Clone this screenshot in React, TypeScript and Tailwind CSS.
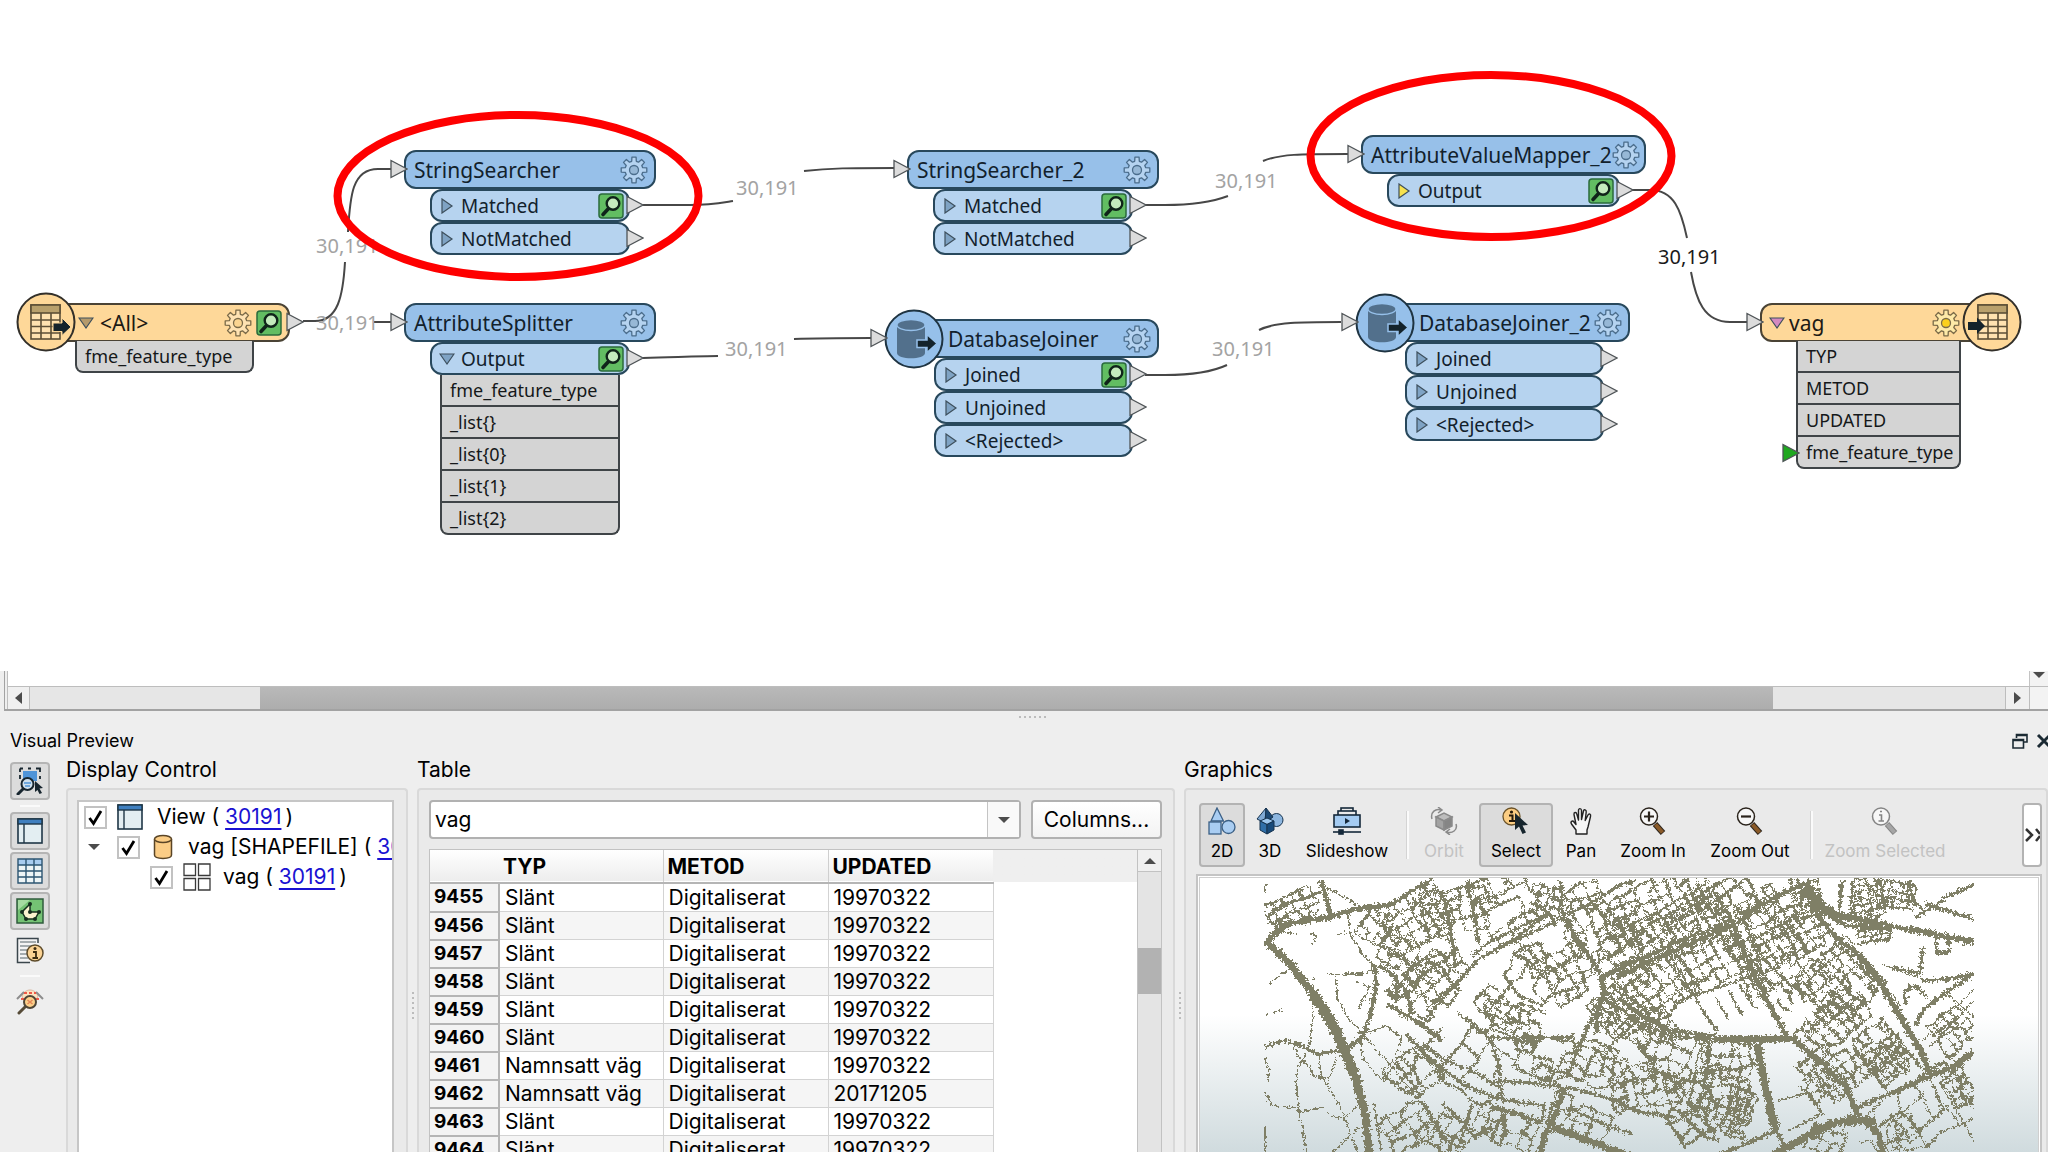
import type { ReactNode } from "react";

const FONT_NODE = "font-['Noto_Sans','Open_Sans',sans-serif]";
const FONT_UI = "font-['Inter','Liberation_Sans',sans-serif]";

/* ---------- canvas icons ---------- */

function gearPath(c: number, outer: number, inner: number) {
  const pts: string[] = [];
  for (let i = 0; i < 8; i++) {
    const a = (i * Math.PI) / 4 - Math.PI / 2;
    const steps: [number, number][] = [
      [-0.26, inner],
      [-0.16, outer],
      [0.16, outer],
      [0.26, inner],
    ];
    steps.forEach(([d, r]) => {
      pts.push(`${(c + Math.cos(a + d) * r).toFixed(1)} ${(c + Math.sin(a + d) * r).toFixed(1)}`);
    });
  }
  return `M${pts.join("L")}Z`;
}

const GEAR = gearPath(14, 13, 9);

function Gear({ body, line, hub }: { body: string; line: string; hub: string }) {
  return (
    <svg width="28" height="28" viewBox="0 0 28 28" className="shrink-0">
      <path d={GEAR} fill={body} stroke={line} strokeWidth="1.3" strokeLinejoin="round" />
      <circle cx="14" cy="14" r="4.5" fill={hub} stroke={line} strokeWidth="1.3" />
    </svg>
  );
}

function Inspect() {
  return (
    <svg width="26" height="26" viewBox="0 0 26 26" className="shrink-0">
      <rect x="1" y="1" width="24" height="24" rx="3" fill="#62bd62" stroke="#2b6b3c" strokeWidth="1.5" />
      <path d="M11 15L5 21.500" stroke="#10241a" strokeWidth="3.6" strokeLinecap="round" />
      <circle cx="15" cy="10.500" r="6.300" fill="#c4ebbd" stroke="#10241a" strokeWidth="2.400" />
    </svg>
  );
}

function Arrow({ fill = "#dcdcdc" }: { fill?: string }) {
  return (
    <svg width="18" height="20" viewBox="0 0 18 20" className="block">
      <path d="M1 1.500L17 10L1 18.500Z" fill={fill} stroke="#4f5457" strokeWidth="1.3" />
    </svg>
  );
}

function Toggle({ open, fill }: { open?: boolean; fill: string }) {
  return (
    <svg width="16" height="16" viewBox="0 0 16 16" className="shrink-0">
      <path d={open ? "M1 3H15L8 13Z" : "M3 1L13 8L3 15Z"} fill={fill} stroke="#3d4f5c" strokeWidth="1.2" />
    </svg>
  );
}

function DatabaseBadge() {
  return (
    <svg width="60" height="60" viewBox="0 0 60 60">
      <circle cx="30" cy="30" r="28.500" fill="#96c0ea" stroke="#1f3442" strokeWidth="2" />
      <path d="M13 16V44C13 51 41 51 41 44V16Z" fill="#52708c" />
      <ellipse cx="27" cy="16" rx="14" ry="5.500" fill="#52708c" stroke="#96c0ea" strokeWidth="1.4" />
      <path d="M33 31H43V25.500L53 34.500L43 43.500V38.500H33Z" fill="#14232b" stroke="#96c0ea" strokeWidth="1.5" />
    </svg>
  );
}

function TableBadge({ writer }: { writer?: boolean }) {
  const x = writer ? 16 : 15;
  return (
    <svg width="60" height="60" viewBox="0 0 60 60">
      <circle cx="30" cy="30" r="28.500" fill="#fed899" stroke="#33302a" strokeWidth="2" />
      <g stroke="#5c4f36" strokeWidth="1.6" fill="#fee2b0">
        <rect x={x} y="13" width="29" height="34" />
        <rect x={x} y="13" width="29" height="8" fill="#b8a06c" />
        <path d={`M${x} 28H${x + 29}M${x} 34.500H${x + 29}M${x} 41H${x + 29}M${x + 10} 21V47M${x + 20} 21V47`} />
      </g>
      {writer ? (
        <path d="M6 30H15V25.500L23 34L15 42V38H6Z" fill="#14232b" />
      ) : (
        <path d="M37 31H46V26L55 35L46 43.500V39.500H37Z" fill="#14232b" stroke="#fed899" />
      )}
    </svg>
  );
}

/* ---------- workflow nodes ---------- */

interface Port {
  name: string;
  inspect?: boolean;
  open?: boolean;
  fresh?: boolean;
}

interface NodeProps {
  x: number;
  y: number;
  w: number;
  title: string;
  titlePad?: string;
  badge?: "database";
  portPad: string;
  ports: Port[];
  attrs?: string[];
}

function AttrList({ attrs }: { attrs: string[] }) {
  return attrs.map((a, i) => (
    <div
      key={a}
      className={`flex h-8 items-center border-2 border-t-0 border-[#3f4447] bg-[#d4d4d4] pl-2 text-lg leading-6 text-[#15181a] ${
        i === attrs.length - 1 ? "rounded-b-lg" : ""
      }`}
    >
      {a}
    </div>
  ));
}

function TransformerNode({ x, y, w, title, titlePad = "pl-2", badge, portPad, ports, attrs }: NodeProps) {
  return (
    <div className="absolute" style={{ left: x, top: y, width: w }}>
      <div
        className={`flex h-[39px] items-center justify-between rounded-xl border-2 border-[#28485c] bg-[#97c0e9] pr-1.5 text-[21px] leading-8 text-[#12212c] ${titlePad}`}
      >
        <span className="whitespace-nowrap">{title}</span>
        <Gear body="#b5d3f0" line="#4b6d8c" hub="#97b8d6" />
      </div>
      {badge && (
        <div className="absolute -left-[30px] -top-[10px]">
          <DatabaseBadge />
        </div>
      )}
      <div className={badge ? "absolute -left-[44px] top-[9px]" : "absolute -left-[14px] top-[9px]"}>
        <Arrow />
      </div>
      <div className={`pr-[26px] ${portPad}`}>
        {ports.map((p) => (
          <div
            key={p.name}
            className="relative flex h-[33px] items-center gap-1.5 rounded-xl border-2 border-[#28485c] bg-[#b6d3ef] pl-[7px] pr-1 text-[19px] leading-7 text-[#12212c]"
          >
            <Toggle open={p.open} fill={p.fresh ? "#f7e24e" : "#7fa3c4"} />
            <span className="flex-1">{p.name}</span>
            {p.inspect && <Inspect />}
            <div className="absolute -right-[16px] top-[4px]">
              <Arrow />
            </div>
          </div>
        ))}
        {attrs && (
          <div className="px-2.5">
            <AttrList attrs={attrs} />
          </div>
        )}
      </div>
    </div>
  );
}

const NODES: NodeProps[] = [
  { x: 404, y: 150, w: 252, title: "StringSearcher", portPad: "pl-[26px]", ports: [{ name: "Matched", inspect: true }, { name: "NotMatched" }] },
  {
    x: 404, y: 303, w: 252, title: "AttributeSplitter", portPad: "pl-[26px]",
    ports: [{ name: "Output", inspect: true, open: true }],
    attrs: ["fme_feature_type", "_list{}", "_list{0}", "_list{1}", "_list{2}"],
  },
  { x: 907, y: 150, w: 252, title: "StringSearcher_2", portPad: "pl-[26px]", ports: [{ name: "Matched", inspect: true }, { name: "NotMatched" }] },
  {
    x: 914, y: 319, w: 245, title: "DatabaseJoiner", titlePad: "pl-8", badge: "database", portPad: "pl-5",
    ports: [{ name: "Joined", inspect: true }, { name: "Unjoined" }, { name: "<Rejected>" }],
  },
  { x: 1361, y: 135, w: 285, title: "AttributeValueMapper_2", titlePad: "pl-2", portPad: "pl-[26px]", ports: [{ name: "Output", inspect: true, fresh: true }] },
  {
    x: 1385, y: 303, w: 245, title: "DatabaseJoiner_2", titlePad: "pl-8", badge: "database", portPad: "pl-5",
    ports: [{ name: "Joined" }, { name: "Unjoined" }, { name: "<Rejected>" }],
  },
];

function ReaderNode() {
  return (
    <div className="absolute left-[46px] top-[303px] w-[244px]">
      <div className="flex h-[39px] items-center gap-1 rounded-r-xl border-2 border-[#4a4335] bg-[#fed899] pl-[30px] pr-1.5 text-[21px] leading-8 text-[#1c1a15]">
        <Toggle open fill="#b59a6b" />
        <span className="flex-1 pl-0.5">&lt;All&gt;</span>
        <Gear body="#fee2b2" line="#7a6a48" hub="#fbd591" />
        <Inspect />
      </div>
      <div className="absolute -left-[30px] -top-[11px]">
        <TableBadge />
      </div>
      <div className="absolute -right-[14px] top-[9px]">
        <Arrow />
      </div>
      <div className="-mt-px ml-[29px] w-[179px]">
        <AttrList attrs={["fme_feature_type"]} />
      </div>
    </div>
  );
}

function WriterNode() {
  return (
    <div className="absolute left-[1760px] top-[303px] w-[232px]">
      <div className="flex h-[39px] items-center gap-1 rounded-l-xl border-2 border-[#4a4335] bg-[#fed899] pl-[7px] pr-[30px] text-[21px] leading-8 text-[#1c1a15]">
        <Toggle open fill="#d58ac0" />
        <span className="flex-1">vag</span>
        <Gear body="#feeaa8" line="#7a6a48" hub="#fbd01c" />
      </div>
      <div className="absolute -right-[30px] -top-[11px]">
        <TableBadge writer />
      </div>
      <div className="absolute -left-[14px] top-[9px]">
        <Arrow />
      </div>
      <div className="-mt-px ml-9 w-[165px]">
        <AttrList attrs={["TYP", "METOD", "UPDATED", "fme_feature_type"]} />
      </div>
      <div className="absolute bottom-[6px] left-[22px]">
        <Arrow fill="#1fa81f" />
      </div>
    </div>
  );
}

const EDGES = [
  "M303 321H315C338 321 343 296 345 262",
  "M348 232C350 196 352 169 378 169H392",
  "M374 322H392",
  "M643 205H690C710 205 720 203 733 201",
  "M804 171C830 168 850 168 895 168",
  "M1145 205H1165C1190 205 1212 202 1228 196",
  "M1263 161C1280 154 1300 154 1348 154",
  "M643 358C680 357 700 356 718 356",
  "M794 339C820 338 840 338 871 338",
  "M1145 375H1165C1190 375 1212 372 1227 365",
  "M1259 330C1275 322 1300 322 1341 322",
  "M1631 190H1650C1674 190 1681 210 1687 238",
  "M1691 272C1696 300 1704 322 1730 322H1748",
];

const COUNTS: { x: number; y: number; dark?: boolean }[] = [
  { x: 316, y: 232 },
  { x: 316, y: 309 },
  { x: 736, y: 174 },
  { x: 725, y: 335 },
  { x: 1215, y: 167 },
  { x: 1212, y: 335 },
  { x: 1658, y: 243, dark: true },
];

function Workspace() {
  return (
    <section className={`relative h-[671px] shrink-0 overflow-hidden bg-white ${FONT_NODE}`} aria-label="Workspace">
      <svg className="absolute left-0 top-0" width="2048" height="671" viewBox="0 0 2048 671" fill="none" stroke="#474747" strokeWidth="2">
        {EDGES.map((d) => (
          <path key={d} d={d} />
        ))}
      </svg>
      {COUNTS.map((c) => (
        <span
          key={`${c.x}-${c.y}`}
          className={`absolute text-xl leading-7 ${c.dark ? "text-[#1a1a1a]" : "text-[#a3a3a3]"}`}
          style={{ left: c.x, top: c.y }}
        >
          30,191
        </span>
      ))}
      <ReaderNode />
      {NODES.map((n) => (
        <TransformerNode key={n.title} {...n} />
      ))}
      <WriterNode />
      <svg className="absolute left-0 top-0" width="2048" height="671" viewBox="0 0 2048 671" fill="none" stroke="#fe0000" strokeWidth="8">
        <ellipse cx="518" cy="196" rx="180.500" ry="81" />
        <ellipse cx="1491" cy="156" rx="180.500" ry="81" />
      </svg>
    </section>
  );
}

function Caret({ d }: { d: string }) {
  return (
    <svg width="14" height="14" viewBox="0 0 14 14" fill="#4c4c4c" className="shrink-0">
      <path d={d} />
    </svg>
  );
}

function WorkspaceScrollbars() {
  return (
    <div className="ml-1 shrink-0 border-b-2 border-l border-[#a2a2a2]">
      <div className="ml-0.5 border-l border-[#bdbdbd] bg-white">
        <div className="flex h-[15px] justify-end">
          <div className="flex w-[19px] items-start justify-center overflow-hidden border-l border-[#c4c4c4] bg-[#f3f3f3]">
            <Caret d="M1 1H13L7 7Z" />
          </div>
        </div>
        <div className="flex h-[23px] border-t border-[#bdbdbd] bg-[#e6e6e6]">
          <button aria-label="Scroll left" className="flex w-[22px] items-center justify-center border-r border-[#bdbdbd] bg-[#f0f0f0]">
            <Caret d="M10 1V13L3 7Z" />
          </button>
          <div className="w-[230px]" />
          <div className="flex-1 bg-gradient-to-b from-[#b9b9b9] to-[#adadad]" />
          <div className="w-[232px]" />
          <button aria-label="Scroll right" className="flex w-6 items-center justify-center border-l border-[#bdbdbd] bg-[#f0f0f0]">
            <Caret d="M3 1V13L10 7Z" />
          </button>
          <div className="w-[19px] border-l border-[#bdbdbd] bg-[#f3f3f3]" />
        </div>
      </div>
    </div>
  );
}

/* ---------- visual preview: side rail ---------- */

function ViewIcon() {
  return (
    <svg width="26" height="26" viewBox="0 0 26 26" className="shrink-0">
      <rect x="1" y="1" width="24" height="24" fill="#e3eef2" stroke="#1e3646" strokeWidth="1.6" />
      <rect x="1" y="1" width="24" height="5" fill="#3f7fbf" stroke="#1e3646" strokeWidth="1.4" />
      <path d="M7 6V25" stroke="#1e3646" strokeWidth="1.4" />
    </svg>
  );
}

function GridIcon() {
  return (
    <svg width="26" height="26" viewBox="0 0 26 26">
      <rect x="1" y="1" width="24" height="24" fill="#eef5f6" />
      <rect x="1" y="1" width="24" height="6" fill="#a9cdf0" />
      <path d="M1 1H25V25H1ZM1 7H25M1 13H25M1 19H25M9 1V25M17 1V25" fill="none" stroke="#2d5672" strokeWidth="1.4" />
    </svg>
  );
}

function GraphicsIcon() {
  return (
    <svg width="28" height="26" viewBox="0 0 28 26">
      <rect x="1" y="1" width="26" height="24" fill="#74c274" stroke="#2f5c3c" strokeWidth="1.5" />
      <path d="M2 24V12L14 2H2Z" fill="#a5dba1" />
      <path d="M14 6L14 14L23 14L19 21H10L6 14Z" fill="#fbf3cf" stroke="#16301f" strokeWidth="1.5" />
      <g fill="#16301f">
        <circle cx="14" cy="6" r="2" />
        <circle cx="14" cy="14" r="2" />
        <circle cx="23" cy="14" r="2" />
        <circle cx="19" cy="21" r="2" />
        <circle cx="10" cy="21" r="2" />
        <circle cx="6" cy="14" r="2" />
      </g>
    </svg>
  );
}

function InspectAreaIcon() {
  return (
    <svg width="28" height="28" viewBox="0 0 28 28">
      <rect x="7" y="4" width="14" height="10" fill="#4f94d8" />
      <path d="M4 1.500H7M12 1.500H15M20 1.500H24V5M4 1.500V5M4 8V12M24 9V12" fill="none" stroke="#17252e" strokeWidth="1.800" />
      <path d="M7 22L2 27" stroke="#17252e" strokeWidth="3" strokeLinecap="round" />
      <circle cx="11.500" cy="17" r="6" fill="#cfe0ee" stroke="#17252e" strokeWidth="2" />
      <path d="M8 16H15M9 19H14" stroke="#4f94d8" strokeWidth="1.500" />
      <path d="M19 14L27 21L23.500 21.500L26 26L23.500 27L21.500 23L19 25Z" fill="#17252e" />
    </svg>
  );
}

function InfoTableIcon() {
  return (
    <svg width="28" height="28" viewBox="0 0 28 28">
      <path d="M22 6V1.500H1.500V25.500H14" fill="#f4f4f4" stroke="#3a464c" strokeWidth="1.500" />
      <path d="M4 5H20M4 9H16M4 13H12M4 17H11M4 21H12" stroke="#8b9498" strokeWidth="1.500" />
      <circle cx="19" cy="16" r="8" fill="#fbd394" stroke="#5d4b2a" strokeWidth="1.500" />
      <circle cx="19" cy="11.500" r="1.500" fill="#3c2d12" />
      <path d="M17 15H20V21M16.500 21H22" fill="none" stroke="#3c2d12" strokeWidth="1.800" />
    </svg>
  );
}

function EyeSearchIcon() {
  return (
    <svg width="28" height="28" viewBox="0 0 28 28">
      <path d="M6 9C9 1 19 1 22 9L20 14H8Z" fill="#fde3c0" stroke="#d8b7a0" strokeWidth="1" />
      <path d="M1 12L8 5M27 12L20 5" stroke="#8d8d8d" strokeWidth="2" />
      <path d="M8 6H20M5 12H23" stroke="#ee5a48" strokeWidth="2" strokeDasharray="3 2" />
      <path d="M9 20L3 26" stroke="#564b38" strokeWidth="3" strokeLinecap="round" />
      <circle cx="14" cy="15" r="6" fill="#fbd08a" stroke="#4e4536" strokeWidth="2" />
      <path d="M11.500 13L16.500 17M16.500 13L11.500 17" stroke="#e58658" strokeWidth="1.500" />
    </svg>
  );
}

function RailButton({ label, pressed, children }: { label: string; pressed?: boolean; children: ReactNode }) {
  return (
    <button
      aria-label={label}
      aria-pressed={pressed}
      className={`flex h-[38px] w-10 items-center justify-center rounded border-2 ${
        pressed ? "border-[#b5b5b5] bg-[#dcdcdc]" : "border-transparent"
      }`}
    >
      {children}
    </button>
  );
}

function Rail() {
  return (
    <nav className="flex w-[58px] shrink-0 flex-col items-center gap-0.5 pl-px pt-1" aria-label="Preview panels">
      <RailButton label="Inspect selection" pressed><InspectAreaIcon /></RailButton>
      <div className="my-[3px] h-0.5 w-5 bg-[#fafafa]" />
      <RailButton label="Display control" pressed><ViewIcon /></RailButton>
      <RailButton label="Table" pressed><GridIcon /></RailButton>
      <RailButton label="Graphics" pressed><GraphicsIcon /></RailButton>
      <RailButton label="Feature information"><InfoTableIcon /></RailButton>
      <div className="my-[3px] h-0.5 w-5 bg-[#fafafa]" />
      <RailButton label="Toggle inspection"><EyeSearchIcon /></RailButton>
    </nav>
  );
}

/* ---------- display control ---------- */

function Tick({ label }: { label: string }) {
  return (
    <span className="grid size-[23px] shrink-0">
      <input
        type="checkbox"
        defaultChecked
        aria-label={label}
        className="peer col-start-1 row-start-1 size-[23px] appearance-none border-2 border-[#c2c2c2] bg-white"
      />
      <svg viewBox="0 0 23 23" className="pointer-events-none invisible col-start-1 row-start-1 peer-checked:visible">
        <path d="M5.500 12L9.500 17.500L17 5" fill="none" stroke="#000" strokeWidth="2.800" />
      </svg>
    </span>
  );
}

function DbIcon() {
  return (
    <svg width="26" height="26" viewBox="0 0 26 26" fill="#fbcd86" stroke="#5a4526" strokeWidth="1.500" className="shrink-0">
      <path d="M4.500 5V21C4.500 25.500 21.500 25.500 21.500 21V5" />
      <ellipse cx="13" cy="5" rx="8.500" ry="3.600" />
    </svg>
  );
}

function LayersIcon() {
  return (
    <svg width="28" height="28" viewBox="0 0 28 28" fill="none" stroke="#3a3a3a" strokeWidth="1.300" className="shrink-0">
      <path d="M1 1H12.500V12.500H1ZM15.500 1H27V12.500H15.500ZM1 15.500H12.500V27H1ZM15.500 15.500H27V27H15.500Z" />
    </svg>
  );
}

function Count() {
  return <a href="#features" className="mr-1 text-[#1a12d2] underline decoration-2 underline-offset-4">30191</a>;
}

function Panel({ title, children }: { title: string; children: ReactNode }) {
  return (
    <section className="flex min-w-0 flex-1 flex-col">
      <h2 className="h-[30px] text-[21px] leading-6">{title}</h2>
      <div className="min-h-0 flex-1 rounded-t border-2 border-b-0 border-[#d9d9d9] bg-[#eaeaea]">{children}</div>
    </section>
  );
}

function DisplayTree() {
  return (
    <div className="h-full pl-[9px] pr-3 pt-2.5">
      <ul className="h-full overflow-hidden whitespace-nowrap border-2 border-b-0 border-[#c6c6c6] bg-white text-[21px] leading-[30px]">
        <li className="flex h-[30px] items-center gap-2.5 pl-[5px]">
          <Tick label="View" />
          <ViewIcon />
          <span className="pl-1">View ( <Count />)</span>
        </li>
        <li className="flex h-[30px] items-center gap-2.5 pl-2">
          <button aria-label="Collapse vag" className="w-5 shrink-0"><Caret d="M1 4H13L7 10Z" /></button>
          <Tick label="vag SHAPEFILE" />
          <DbIcon />
          <span className="pl-0.5">vag [SHAPEFILE] ( <Count />)</span>
        </li>
        <li className="flex h-[30px] items-center gap-2.5 pl-[71px]">
          <Tick label="vag" />
          <LayersIcon />
          <span className="pl-0.5">vag ( <Count />)</span>
        </li>
      </ul>
    </div>
  );
}

function SplitDots() {
  return (
    <div className="flex w-[9px] shrink-0 flex-col items-center gap-[3px] pt-[234px]">
      {[...Array(6)].map((_, i) => (
        <i key={i} className="size-0.5 bg-[#bcbcbc]" />
      ))}
    </div>
  );
}

/* ---------- table ---------- */

const ROWS = [
  ["9455", "Slänt", "19970322"],
  ["9456", "Slänt", "19970322"],
  ["9457", "Slänt", "19970322"],
  ["9458", "Slänt", "19970322"],
  ["9459", "Slänt", "19970322"],
  ["9460", "Slänt", "19970322"],
  ["9461", "Namnsatt väg", "19970322"],
  ["9462", "Namnsatt väg", "20171205"],
  ["9463", "Slänt", "19970322"],
  ["9464", "Slänt", "19970322"],
];

function TableView() {
  return (
    <div className="flex h-full flex-col gap-2.5 overflow-hidden pl-2.5 pr-[11px] pt-2.5">
      <div className="flex h-[39px] shrink-0 gap-2.5">
        <label className="grid flex-1">
          <select
            aria-label="Feature type"
            className="col-start-1 row-start-1 appearance-none rounded border-2 border-[#b1b1b1] bg-white px-1 text-[21px]"
          >
            <option>vag</option>
          </select>
          <span className="pointer-events-none col-start-1 row-start-1 my-0.5 mr-0.5 flex w-8 items-center justify-center justify-self-end border-l border-[#c4c4c4] bg-[#f9f9f9]">
            <Caret d="M1 4H13L7 10Z" />
          </span>
        </label>
        <button className="w-[131px] rounded border-2 border-[#b1b1b1] bg-gradient-to-b from-white to-[#f3f3f3] text-[21px]">
          Columns...
        </button>
      </div>
      <div className="flex min-h-0 flex-1 border border-b-0 border-[#c2c2c2] bg-white">
        <div className="flex-1 overflow-hidden">
          <div className="bg-gradient-to-b from-[#efefef] from-[32px] to-white to-[32px]">
            <table className="w-[563px] table-fixed border-collapse text-left text-[21px]">
              <colgroup>
                <col className="w-[69px]" />
                <col className="w-[164px]" />
                <col className="w-[165px]" />
                <col className="w-[165px]" />
              </colgroup>
              <thead>
                <tr className="h-[33px] border-b-2 border-[#b5b5b5] bg-gradient-to-b from-white to-[#ededed] leading-[30px]">
                  <td />
                  <th scope="col" className="border-r border-[#cfcfcf] p-0 pl-1 pt-px font-bold">TYP</th>
                  <th scope="col" className="border-r border-[#cfcfcf] p-0 pl-1 pt-px font-bold">METOD</th>
                  <th scope="col" className="p-0 pl-1 pt-px font-bold">UPDATED</th>
                </tr>
              </thead>
              <tbody>
                {ROWS.map(([id, typ, date]) => (
                  <tr key={id} className="h-7 bg-white leading-[27px] even:bg-[#f5f5f5]">
                    <th scope="row" className="border-b-2 border-r-2 border-[#b5b5b5] bg-[#f3f3f3] p-0 pl-1 text-[19px] font-bold leading-[26px]">{id}</th>
                    <td className="border-b border-r border-[#d3d3d3] p-0 pl-[5px]">{typ}</td>
                    <td className="border-b border-r border-[#d3d3d3] p-0 pl-[5px]">Digitaliserat</td>
                    <td className="border-b border-r border-[#d3d3d3] p-0 pl-[5px]">{date}</td>
                  </tr>
                ))}
              </tbody>
            </table>
          </div>
        </div>
        <div className="flex w-6 flex-col border-l border-[#c2c2c2] bg-[#e4e4e4]">
          <button aria-label="Scroll up" className="flex h-[22px] items-center justify-center border-b border-[#c2c2c2] bg-[#f0f0f0]">
            <Caret d="M1 10H13L7 4Z" />
          </button>
          <div className="h-[76px]" />
          <div className="h-[46px] bg-[#b2b2b2]" />
        </div>
      </div>
    </div>
  );
}

/* ---------- graphics toolbar ---------- */

const svg28 = { width: 28, height: 28, viewBox: "0 0 28 28" };

const Icon2D = (
  <svg {...svg28} fill="#a9cdf2" stroke="#3a5f85" strokeWidth="1.300">
    <path d="M9 1L15.500 14H3Z" />
    <rect x="1" y="15" width="12" height="12" />
    <circle cx="20.500" cy="20" r="6.500" />
  </svg>
);
const Icon3D = (
  <svg {...svg28} stroke="#16334f" strokeWidth="1">
    <circle cx="20.500" cy="13" r="6.500" fill="#8db6df" />
    <path d="M10 1L1 12L9 16Z" fill="#7fa9d4" />
    <path d="M10 1L9 16L17 10Z" fill="#1c4873" />
    <path d="M4 14L11 11L18 14L11 17.500Z" fill="#9cc6ee" />
    <path d="M4 14L11 17.500V27L4 23Z" fill="#2f6ea8" />
    <path d="M18 14L11 17.500V27L18 23Z" fill="#184a7a" />
  </svg>
);
const IconSlides = (
  <svg {...svg28} fill="#a4cbf1" stroke="#15283a" strokeWidth="1.600">
    <rect x="8" y="1" width="12" height="5" fill="#eaeaea" />
    <rect x="5" y="4" width="18" height="5" fill="#eaeaea" />
    <rect x="1" y="8" width="26" height="12" />
    <path d="M12 11V17L17 14Z" fill="#15283a" stroke="none" />
    <path d="M0 25H28" />
    <rect x="6" y="23" width="4" height="4" fill="#15283a" />
  </svg>
);
const IconOrbit = (
  <svg {...svg28} fill="none" stroke="#8a8a8a" strokeWidth="1.500">
    <path d="M2 12C0 5 6 1 11 3M8 0L12 3L8 6" />
    <path d="M26 17C28 23 22 27 17 25M20 22L16 25L20 28" />
    <path d="M6 10L14 6L22 10L14 14Z" fill="#bdbdbd" />
    <path d="M6 10L14 14V23L6 19Z" fill="#a3a3a3" />
    <path d="M22 10L14 14V23L22 19Z" fill="#858585" />
  </svg>
);
const IconSelect = (
  <svg {...svg28}>
    <circle cx="9.500" cy="9.500" r="8.500" fill="#fbcd83" stroke="#6a5228" strokeWidth="1.300" />
    <circle cx="9.500" cy="5" r="1.600" fill="#24190a" />
    <path d="M7 8.500H10.500V14M7 14H13" fill="none" stroke="#24190a" strokeWidth="2" />
    <path d="M13 6V23L17 19.500L20.500 27L24 25.500L20.500 18.500L26 18Z" fill="#16252d" />
  </svg>
);
const IconPan = (
  <svg {...svg28} fill="#f6f6f6" stroke="#222" strokeWidth="1.400" strokeLinejoin="round" strokeLinecap="round">
    <path d="M9 27V23L4.500 17C3 14.500 5.500 13 7 15L9 17.500L7 7.500C6.700 5 9.300 4.700 9.800 7L11.500 13V3.500C11.500 1 14.300 1 14.500 3.500V12.500L16.500 4C17 2 19.500 2.500 19.200 5L18.200 13.500L21 8C22 6 24.200 7 23.500 9.500L21 20L20 23V27Z" />
  </svg>
);

function Lens({ sign, handle, line }: { sign: ReactNode; handle: string; line: string }) {
  return (
    <svg {...svg28}>
      <path d="M16 17L24 26" stroke={line} strokeWidth="6" />
      <path d="M16.500 17.500L23.500 25.500" stroke={handle} strokeWidth="4" />
      <circle cx="10" cy="9.500" r="8.500" fill="#f7f7f7" stroke={line} strokeWidth="1.500" />
      <g fill="none" stroke={line} strokeWidth="2.200">{sign}</g>
    </svg>
  );
}

interface Tool {
  label: string;
  icon: ReactNode;
  cls: string;
  on?: boolean;
  off?: boolean;
  sep?: boolean;
}

const TOOLS: Tool[] = [
  { label: "2D", icon: Icon2D, cls: "w-[46px]", on: true },
  { label: "3D", icon: Icon3D, cls: "w-[50px]" },
  { label: "Slideshow", icon: IconSlides, cls: "w-[104px]" },
  { label: "Orbit", icon: IconOrbit, cls: "w-[62px]", off: true, sep: true },
  { label: "Select", icon: IconSelect, cls: "ml-1 w-[74px]", on: true },
  { label: "Pan", icon: IconPan, cls: "w-14" },
  { label: "Zoom In", icon: <Lens sign={<path d="M5 9.500H15M10 4.500V14.500" />} handle="#8a5a28" line="#2b241c" />, cls: "w-[88px]" },
  { label: "Zoom Out", icon: <Lens sign={<path d="M5 9.500H15" />} handle="#8a5a28" line="#2b241c" />, cls: "w-[106px]" },
  { label: "Zoom Selected", icon: <Lens sign={<path d="M8 8H10.500V14M7.500 14H13M9 4.500H11" strokeWidth="1.600" />} handle="#a5a5a5" line="#858585" />, cls: "w-[136px]", off: true, sep: true },
];

function Toolbar() {
  return (
    <div className="flex h-16 shrink-0 pl-[3px]" role="toolbar">
      {TOOLS.map((t) => (
        <div key={t.label} className="flex">
          {t.sep && <div className="my-2 ml-2 mr-1 w-0.5 bg-[#fafafa] shadow-[-1px_0_0_#d4d4d4]" />}
          <button
            disabled={t.off}
            className={`flex flex-col items-center gap-1 whitespace-nowrap rounded border-2 pt-0.5 text-[17px] leading-6 ${t.cls} ${
              t.on ? "border-[#b3b3b3] bg-[#dcdcdc]" : "border-transparent"
            } ${t.off ? "text-[#c2c2c2]" : "text-black"}`}
          >
            {t.icon}
            {t.label}
          </button>
        </div>
      ))}
      <button aria-label="More tools" className="ml-auto flex w-5 items-center justify-center overflow-hidden rounded border-2 border-[#b3b3b3] bg-white">
        <svg width="16" height="16" viewBox="0 0 16 16" fill="none" stroke="#333" strokeWidth="2.500" className="shrink-0">
          <path d="M2 2L8 8L2 14M12 2L16 7M12 14L16 9" />
        </svg>
      </button>
    </div>
  );
}

/* ---------- road map ---------- */

const ROADS: [number, string][] = [
  [20, "M22 205L85 260L160 355L215 440L255 525"],
  [30, "M160 355L215 440L255 525L285 600"],
  [22, "M255 525L290 610L318 720L332 850"],
  [5, "M345 690L362 800L370 850"],
  [14, "M16 215L45 180L80 150L210 130L290 105L400 90"],
  [8, "M400 90L450 55L515 20"],
  [12, "M185 20L200 60L215 125"],
  [4, "M20 130L90 90L190 50M60 100L130 70M200 40L310 100M90 120L170 90M20 150L70 140"],
  [10, "M345 270L352 330L335 420L310 490L270 520"],
  [8, "M235 530L180 540L120 512L70 500L16 520"],
  [5, "M265 120L275 180L310 240L345 275L320 300L200 302"],
  [4, "M230 310L235 370L265 430L320 490L410 590L495 700"],
  [4, "M165 310L160 430L152 520L112 590L115 680L130 760L145 850"],
  [4, "M16 550L32 590L28 620M16 655L40 695L115 702M180 540L185 600L250 710L300 850M115 715L190 700L215 725L255 735L300 690M300 760L215 840"],
  [4, "M100 510L120 550L150 575L160 605L210 615L232 550M305 490L310 550L350 600L375 620L400 580M320 480L380 455L430 490L410 540"],
  [4, "M18 30V58M18 760V850M20 335L85 290M18 420L68 410M290 320L330 340L295 410"],
  [4, "M75 175L115 180M150 180L175 185L160 210M235 180L270 175M400 240L450 270L440 310M500 260L540 240L590 235"],
  [9, "M385 345L410 380L415 340L400 330M385 240L430 245L460 290"],
  [8, "M490 450L540 385L600 320L660 255L730 215L800 185L915 130"],
  [7, "M640 245L700 200L790 155L870 120"],
  [8, "M915 125L1000 85L1080 35L1130 20"],
  [8, "M625 20L640 100L660 210M545 50L570 130L590 280"],
  [8, "M905 20L910 125"],
  [12, "M915 135L960 200L1000 260L1025 300"],
  [14, "M1028 300L1035 360L1010 430L1015 480"],
  [10, "M1000 430L960 520L925 610"],
  [16, "M915 640L890 720L860 780L840 850"],
  [10, "M360 275L400 300L440 350L460 410M385 390L470 440L550 500"],
  [8, "M440 480L530 570L620 635L720 675L855 695L850 740"],
  [7, "M410 565L490 670M490 510L560 560L660 600L720 640M550 690L610 740M500 700L560 800L600 820L640 690"],
  [7, "M620 430L690 490L720 570L730 680M700 492L945 490M770 500L830 510L820 535L775 530Z"],
  [8, "M825 590L850 570L885 590L870 620L835 610M720 620L800 625L915 640"],
  [12, "M700 700L780 720L850 750M735 720V790M700 760L640 790"],
  [7, "M920 640L990 655L1100 690M930 700L1010 740L1120 780"],
  [18, "M880 760L960 790L1040 820L1110 845"],
  [10, "M1028 310L1120 265L1210 225L1330 170"],
  [12, "M1080 305L1220 240L1430 150L1500 95L1570 60L1640 25"],
  [14, "M1420 150L1450 220L1490 310L1530 390L1585 490"],
  [7, "M1450 130L1510 250L1590 330L1640 360L1700 420L1640 480"],
  [16, "M1595 495H1370"],
  [7, "M1370 485L1240 475L1150 430L1080 375M1370 495L1235 488L1140 445L1030 370"],
  [22, "M1495 510L1515 620L1550 770"],
  [20, "M1640 25L1680 90L1740 125L1850 145"],
  [10, "M1850 145L1960 170L2145 205M1640 50L1700 120L1760 155L1900 165"],
  [14, "M1950 165L2050 185L2145 203"],
  [12, "M1630 45L1680 130L1730 190L1790 235L1860 320"],
  [16, "M1800 240L1870 335L1930 440L1985 530L2015 600"],
  [4, "M1905 360L1990 560L2010 590M2040 620L2145 800M1900 470L1920 510L2005 600"],
  [16, "M2145 535L2080 580L2015 605"],
  [10, "M2015 605L1900 655L1795 700M1795 720L1720 755L1620 800"],
  [20, "M1850 740L1720 745L1620 800L1540 845"],
  [14, "M1595 490L1680 560L1760 640L1795 720L1860 780L1870 850"],
  [10, "M1550 770L1480 800L1380 845M1550 770L1580 820"],
  [5, "M1560 680L1650 655L1690 720L1590 770M1650 655L1620 560"],
  [8, "M1080 690L1150 715L1250 730M1220 730L1280 820M1260 710L1340 790L1380 800M1290 690L1370 780"],
  [8, "M1130 490L1190 590L1250 625L1340 620L1350 500M1340 590L1460 585"],
  [9, "M1990 320L2070 315L2145 300M2145 300L2060 355L1990 410L1970 455"],
  [4, "M1990 500L2145 345M2010 520L2145 380M2000 320L1870 270M2060 355L2145 430"],
  [8, "M1940 390L1935 350L1970 335L2005 370M2050 75L2145 30M1970 130L2050 80M2000 90L2145 135"],
  [7, "M1950 20L1960 80L1995 110M1750 20L1740 110M1780 20L1775 120M2030 190L2035 235H2070V195M1990 220L1985 300L1900 280"],
  [6, "M1250 270L1320 390L1370 470M1330 410L1380 470M1370 370L1410 440M1410 350L1450 425M1440 330L1490 405M1290 370L1500 300"],
];

/* [cx, cy, width, height, angle, spacing] */
const DISTRICTS: number[][] = [
  [100, 105, 150, 90, -25, 30],
  [470, 130, 200, 150, -32, 32],
  [590, 110, 130, 200, 78, 34],
  [350, 160, 80, 100, 30, 26],
  [430, 250, 130, 90, 30, 36],
  [540, 290, 150, 120, -42, 36],
  [500, 350, 150, 130, 48, 42],
  [760, 110, 230, 170, 62, 46],
  [860, 80, 90, 90, 10, 24],
  [1000, 150, 130, 230, -28, 34],
  [880, 240, 170, 80, -28, 28],
  [780, 350, 230, 150, -50, 40],
  [940, 320, 100, 130, 65, 30],
  [640, 560, 250, 160, 42, 56],
  [470, 600, 130, 110, 45, 44],
  [760, 440, 170, 90, 10, 36],
  [860, 550, 150, 120, 15, 50],
  [450, 760, 110, 150, 60, 34],
  [560, 780, 150, 110, 35, 40],
  [740, 760, 180, 90, 22, 32],
  [960, 730, 170, 90, 22, 44],
  [990, 560, 130, 150, -70, 36],
  [1070, 410, 120, 130, -40, 20],
  [1200, 90, 330, 160, -30, 30],
  [1300, 150, 220, 130, -32, 23],
  [1120, 200, 170, 150, -30, 36],
  [1400, 80, 170, 110, -32, 32],
  [1350, 260, 200, 150, -28, 32],
  [1210, 340, 180, 140, -40, 32],
  [1110, 310, 100, 80, -28, 26],
  [1180, 440, 150, 60, 30, 30],
  [1520, 140, 130, 170, -30, 26],
  [1620, 170, 150, 150, -33, 28],
  [1600, 300, 150, 170, -30, 42],
  [1470, 270, 70, 190, -25, 26],
  [1750, 320, 180, 190, -42, 27],
  [1720, 450, 220, 110, -42, 32],
  [1800, 560, 270, 110, -38, 30],
  [1890, 560, 120, 110, -38, 20],
  [1680, 600, 110, 130, 45, 30],
  [1640, 60, 140, 80, 80, 20],
  [1830, 70, 270, 90, 84, 20],
  [1900, 60, 130, 70, 10, 20],
  [1110, 560, 150, 130, -28, 40],
  [1240, 540, 170, 130, 20, 44],
  [1400, 560, 150, 110, 3, 30],
  [1380, 670, 170, 130, 8, 28],
  [1440, 720, 70, 140, 20, 18],
  [1160, 660, 190, 80, -10, 34],
  [1290, 710, 160, 140, 50, 40],
  [1980, 720, 290, 170, -32, 54],
  [1900, 800, 170, 90, -35, 38],
  [2080, 470, 110, 110, -38, 26],
  [2100, 640, 70, 100, -32, 24],
  [1700, 800, 100, 70, 20, 30],
];

/* parks and fields without streets: [cx, cy, r] */
const OPEN: number[][] = [
  [860, 185, 42], [560, 435, 42], [890, 440, 48], [1480, 450, 40], [1420, 460, 30],
  [1620, 410, 40], [1560, 600, 55], [1620, 720, 55], [1160, 780, 60], [180, 210, 70],
  [735, 110, 24], [1570, 290, 26], [1180, 170, 18], [1560, 365, 22], [1340, 345, 20],
  [560, 690, 30], [680, 610, 24], [1130, 540, 26], [2030, 400, 26],
];

function mulberry(seed: number) {
  let s = seed;
  return () => {
    s = (s + 0x6d2b79f5) | 0;
    let t = Math.imul(s ^ (s >>> 15), 1 | s);
    t = (t + Math.imul(t ^ (t >>> 7), 61 | t)) ^ t;
    return ((t ^ (t >>> 14)) >>> 0) / 4294967296;
  };
}

function buildStreets() {
  const rnd = mulberry(30191);
  const thin: string[] = [];
  const thick: string[] = [];
  DISTRICTS.forEach(([cx, cy, w, h, deg, gap]) => {
    const a = (deg * Math.PI) / 180;
    const nx = Math.max(1, Math.round(w / gap));
    const ny = Math.max(1, Math.round(h / (gap * 1.15)));
    const grid: [number, number][][] = [];
    for (let i = 0; i <= nx; i++) {
      grid.push([]);
      for (let j = 0; j <= ny; j++) {
        const u = (i / nx - 0.5) * w + (rnd() - 0.5) * gap * 0.6;
        const v = (j / ny - 0.5) * h + (rnd() - 0.5) * gap * 0.6;
        grid[i].push([cx + u * Math.cos(a) - v * Math.sin(a), cy + u * Math.sin(a) + v * Math.cos(a)]);
      }
    }
    const link = (p: [number, number], q: [number, number]) => {
      const mx = (p[0] + q[0]) / 2;
      const my = (p[1] + q[1]) / 2;
      const blocked = OPEN.some(([ox, oy, r]) => Math.hypot(mx - ox, my - oy) < r);
      if (blocked || rnd() < 0.1) return;
      const bend = (rnd() - 0.5) * gap * 0.4;
      const d = `M${p[0].toFixed(0)} ${p[1].toFixed(0)}Q${(mx + bend).toFixed(0)} ${(my - bend).toFixed(0)} ${q[0].toFixed(0)} ${q[1].toFixed(0)}`;
      (rnd() < 0.5 ? thick : thin).push(d);
      // short driveways off the street
      if (rnd() < 0.35) {
        const l = gap * 0.3;
        thin.push(`M${mx.toFixed(0)} ${my.toFixed(0)}l${((rnd() - 0.5) * 2 * l).toFixed(0)} ${((rnd() - 0.5) * 2 * l).toFixed(0)}`);
      }
    };
    for (let i = 0; i <= nx; i++) {
      for (let j = 0; j <= ny; j++) {
        if (i < nx) link(grid[i][j], grid[i + 1][j]);
        if (j < ny) link(grid[i][j], grid[i][j + 1]);
      }
    }
  });
  return { thin: thin.join(""), thick: thick.join("") };
}

const STREETS = buildStreets();

function RoadMap() {
  return (
    <svg width="710" height="276" viewBox="15 12 2130 828" fill="none" stroke="#7f7f66" className="block shrink-0" shapeRendering="crispEdges">
      <filter id="rough" x="0" y="0" width="100%" height="100%">
        <feTurbulence type="fractalNoise" baseFrequency="0.11" numOctaves="3" seed="4" />
        <feDisplacementMap in="SourceGraphic" scale="18" xChannelSelector="R" yChannelSelector="G" />
      </filter>
      <g filter="url(#rough)" strokeLinejoin="round">
        <path d={STREETS.thin} strokeWidth="4" />
        <path d={STREETS.thick} strokeWidth="6" />
        <path d={STREETS.thick} strokeWidth="13" strokeDasharray="4 9 3 12 6 7" />
        {ROADS.map(([w, d]) => (
          <path key={d} d={d} strokeWidth={w} />
        ))}
        {ROADS.filter(([w]) => w > 6).map(([w, d]) => (
          <path key={d} d={d} strokeWidth={w + 9} strokeDasharray="4 11 5 8 3 14" />
        ))}
      </g>
    </svg>
  );
}

function GraphicsView() {
  return (
    <div className="flex h-full flex-col gap-[7px] overflow-hidden pl-[10px] pr-1 pt-[13px]">
      <Toolbar />
      <div className="min-h-0 flex-1 border-2 border-b-0 border-[#c4c4c4] bg-white p-px pb-0">
        <div className="flex h-full justify-center overflow-hidden border border-b-0 border-[#cfcfcf] bg-gradient-to-b from-white from-50% to-[#d0dbde]">
          <RoadMap />
        </div>
      </div>
    </div>
  );
}

/* ---------- dock ---------- */

function VisualPreview() {
  return (
    <div className="flex min-h-0 flex-1 flex-col">
      <div className="flex h-3 shrink-0 items-center justify-center gap-[3px] pl-4">
        {[...Array(6)].map((_, i) => (
          <i key={i} className="size-0.5 bg-[#bcbcbc]" />
        ))}
      </div>
      <header className="flex h-[35px] shrink-0 items-center justify-between overflow-hidden pl-2.5">
        <h1 className="text-lg leading-6">Visual Preview</h1>
        <div className="-mr-1 flex gap-2">
          <button aria-label="Float panel">
            <svg width="16" height="16" viewBox="0 0 16 16" fill="none" stroke="#1b2a33" strokeWidth="1.600">
              <path d="M4.500 5V1.500H15V9H11.500M4.500 2.500H15" />
              <path d="M1 6.500H11.500V15H1ZM1 7.500H11.500" />
            </svg>
          </button>
          <button aria-label="Close panel">
            <svg width="16" height="16" viewBox="0 0 16 16" stroke="#1b2a33" strokeWidth="3">
              <path d="M2 2L14 14M14 2L2 14" />
            </svg>
          </button>
        </div>
      </header>
      <div className="flex min-h-0 flex-1">
        <Rail />
        <div className="grid min-w-0 flex-1 grid-cols-[351px_758px_1fr] pl-2">
          <div className="flex min-h-0 min-w-0">
            <Panel title="Display Control"><DisplayTree /></Panel>
            <SplitDots />
          </div>
          <div className="flex min-h-0 min-w-0">
            <Panel title="Table"><TableView /></Panel>
          </div>
          <div className="flex min-h-0 min-w-0">
            <SplitDots />
            <Panel title="Graphics"><GraphicsView /></Panel>
          </div>
        </div>
      </div>
    </div>
  );
}

export default function App() {
  return (
    <main className={`flex h-screen flex-col overflow-hidden bg-[#eeeeee] text-black ${FONT_UI}`}>
      <Workspace />
      <WorkspaceScrollbars />
      <VisualPreview />
    </main>
  );
}
